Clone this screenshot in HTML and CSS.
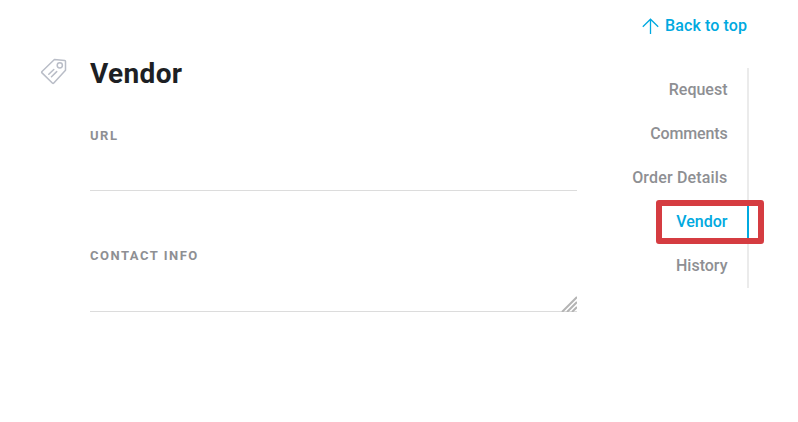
FILE: index.html
```html
<!DOCTYPE html>
<html lang="en">
<head>
<meta charset="utf-8">
<title>Vendor</title>
<link rel="stylesheet" href="styles.css">
</head>
<body>
<div class="page">
  <main class="section">
    <svg class="tag-icon" viewBox="0 0 28 28" fill="none" stroke="#b9bdc7" stroke-width="1.5" stroke-linecap="round" stroke-linejoin="round">
      <path d="M14.4 2.5 2 14.5q-.7.7 0 1.4L12.3 26q.8.7 1.5 0L25.5 13.2V4.2q0-.7-.8-.8Z"/>
      <circle cx="19.8" cy="8.3" r="2.6"/>
      <path d="m8.8 17.3 5-4.8M11.5 19.7l5.2-5.1"/>
    </svg>
    <div class="content">
      <h1 class="title">Vendor</h1>
      <label class="label" for="url">URL</label>
      <input class="field" id="url" type="text">
      <label class="label" for="contact">CONTACT INFO</label>
      <div class="area">
        <textarea class="field" id="contact"></textarea>
        <svg class="grip" viewBox="0 0 16 16" fill="none" stroke="#b4b4b4" stroke-width="2">
          <path d="M1 16 16 1M6 16 16 6M11 16l5-5"/>
        </svg>
      </div>
    </div>
  </main>
  <aside class="side">
    <a class="top-link">
      <svg class="arrow" viewBox="0 0 17 17" fill="none" stroke="#00a9e0" stroke-width="1.3"><path d="M8.5 16V1.2M.8 8.8l7.7-7.6 7.7 7.6"/></svg>
      <span class="back">Back to top</span>
    </a>
    <nav class="nav">
      <a class="item request">Request</a>
      <a class="item comments">Comments</a>
      <a class="item details">Order Details</a>
      <a class="item active">Vendor</a>
      <a class="item history">History</a>
    </nav>
  </aside>
</div>
</body>
</html>
```
FILE: styles.css
```css
*, *::before, *::after { box-sizing: border-box; }
body { margin: 0; background: #fff; font-family: Roboto, "Liberation Sans", sans-serif; }
.page { display: flex; height: 422px; padding: 0 49px 0 40px; justify-content: space-between; overflow: hidden; }
.section { display: flex; width: 537px; padding-top: 57px; }
.tag-icon { width: 28px; height: 28px; flex: none; }
.content { display: flex; flex-direction: column; width: 487px; margin-left: 22px; }
.title { margin: 0; height: 32px; font-size: 28px; line-height: 33px; font-weight: 700; letter-spacing: .35px; color: #1d1f24; }
.label { height: 16px; margin-top: 39px; font-size: 13px; line-height: 16px; font-weight: 700; letter-spacing: 1.5px; color: #8e8f93; }
.field { display: block; width: 100%; height: 47px; padding: 0; border: 0; border-bottom: 1px solid #dcdcdc; border-radius: 0; outline: 0; background: transparent; resize: none; font: 500 16px Roboto, sans-serif; }
.field + .label { margin-top: 57px; }
.area { position: relative; height: 48px; }
.area .field { height: 48px; }
.grip { position: absolute; right: 0; bottom: 0; width: 16px; height: 16px; }
.side { width: 130px; padding-top: 16px; font-size: 16px; font-weight: 500; }
.top-link { display: flex; align-items: center; justify-content: flex-end; height: 20px; margin-right: 2px; color: #00a9e0; }
.arrow { width: 17px; height: 17px; margin-right: 6px; }
.back { height: 20px; line-height: 19px; letter-spacing: .1px; }
.nav { display: flex; flex-direction: column; height: 220px; margin-top: 32px; border-right: 2px solid #ebebeb; }
.item { position: relative; height: 44px; padding-right: 19.5px; line-height: 44px; text-align: right; color: #8e8f93; }
.comments { letter-spacing: -.15px; }
.details { letter-spacing: .17px; }
.active { color: #00a9e0; }
.active::before { content: ""; position: absolute; right: -2px; top: 4px; width: 2px; height: 36px; background: #00a9e0; }
.active::after { content: ""; position: absolute; right: -17px; top: 0; width: 108px; height: 44px; border: 6px solid #d53c41; border-radius: 3px; }
```
